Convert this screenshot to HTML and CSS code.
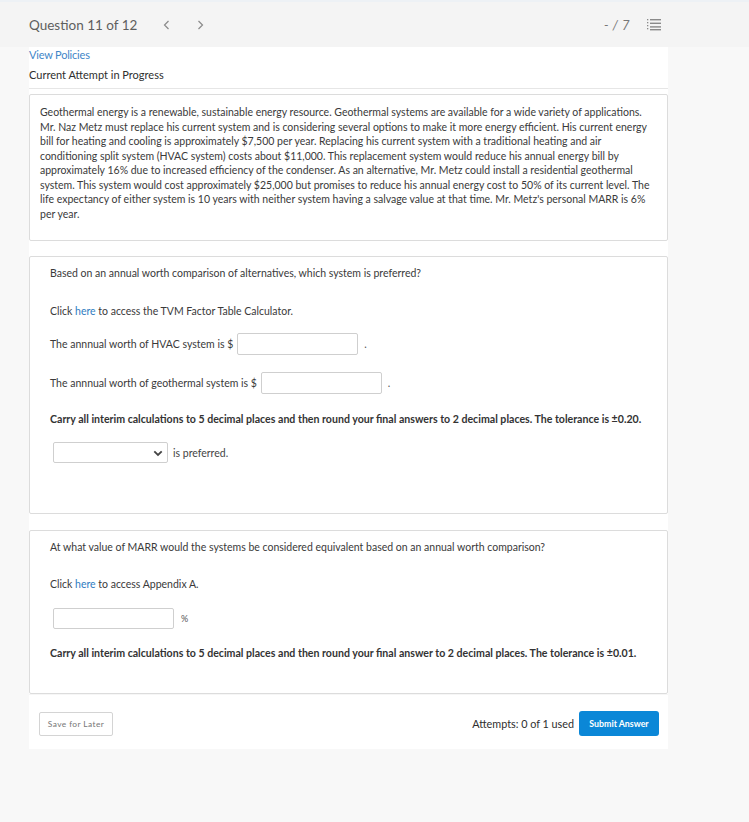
FILE: index.html
```html
<!DOCTYPE html>
<html lang="en">
<head>
<meta charset="utf-8">
<title>Question 11 of 12</title>
<link rel="stylesheet" href="styles.css">
</head>
<body>
<header class="topbar">
  <div class="topbar-inner">
    <div class="qnav">
      <span class="qtitle">Question 11 of 12</span>
      <span class="arrow prev"><svg width="7" height="10" viewBox="0 0 7 10"><path d="M5.5 1 L1.5 5 L5.5 9" fill="none" stroke="#8a8a8a" stroke-width="1.2"/></svg></span>
      <span class="arrow next"><svg width="7" height="10" viewBox="0 0 7 10"><path d="M1.5 1 L5.5 5 L1.5 9" fill="none" stroke="#8a8a8a" stroke-width="1.2"/></svg></span>
    </div>
    <div class="qscore">
      <span class="points">- / 7</span>
      <span class="listicon"><svg width="14" height="13" viewBox="0 0 14 13"><g fill="#8a8a8a"><rect x="0" y="1" width="1.3" height="1.3"/><rect x="0" y="4" width="1.3" height="1.3"/><rect x="0" y="7" width="1.3" height="1.3"/><rect x="0" y="10" width="1.3" height="1.3"/><rect x="3" y="1" width="11" height="1.4"/><rect x="3" y="4.6" width="11" height="1.4"/><rect x="3" y="8.2" width="11" height="1.4"/><rect x="3" y="11" width="11" height="1.4"/></g></svg></span>
    </div>
  </div>
</header>

<main class="column">
  <a class="view-link" href="#">View Policies</a>
  <div class="attempt-status">Current Attempt in Progress</div>

  <section class="box problem">
    <p>Geothermal energy is a renewable, sustainable energy resource. Geothermal systems are available for a wide variety of applications. Mr. Naz Metz must replace his current system and is considering several options to make it more energy efficient. His current energy bill for heating and cooling is approximately $7,500 per year. Replacing his current system with a traditional heating and air conditioning split system (HVAC system) costs about $11,000. This replacement system would reduce his annual energy bill by approximately 16% due to increased efficiency of the condenser. As an alternative, Mr. Metz could install a residential geothermal system. This system would cost approximately $25,000 but promises to reduce his annual energy cost to 50% of its current level. The life expectancy of either system is 10 years with neither system having a salvage value at that time. Mr. Metz's personal MARR is 6% per year.</p>
  </section>

  <section class="box part part-a">
    <p class="line q">Based on an annual worth comparison of alternatives, which system is preferred?</p>
    <p class="line click">Click <a href="#">here</a> to access the TVM Factor Table Calculator.</p>
    <div class="row row-hvac"><span>The annnual worth of HVAC system is $</span><input class="num num-hvac" type="text"><span class="dot">.</span></div>
    <div class="row row-geo"><span>The annnual worth of geothermal system is $</span><input class="num num-geo" type="text"><span class="dot">.</span></div>
    <p class="line carry">Carry all interim calculations to 5 decimal places and then round your final answers to 2 decimal places. The tolerance is ±0.20.</p>
    <div class="row row-select">
      <div class="select"><svg class="chev" width="10" height="7" viewBox="0 0 10 7"><path d="M1.3 1.3 L5 5 L8.7 1.3" fill="none" stroke="#444" stroke-width="1.8"/></svg></div>
      <span class="pref">is preferred.</span>
    </div>
  </section>

  <section class="box part part-b">
    <p class="line q">At what value of MARR would the systems be considered equivalent based on an annual worth comparison?</p>
    <p class="line click">Click <a href="#">here</a> to access Appendix A.</p>
    <div class="row row-pct"><input class="num num-pct" type="text"><span class="pct">%</span></div>
    <p class="line carry">Carry all interim calculations to 5 decimal places and then round your final answer to 2 decimal places. The tolerance is ±0.01.</p>
  </section>

  <footer class="actions">
    <button class="btn-save" type="button">Save for Later</button>
    <div class="submit-area">
      <span class="attempts">Attempts: 0 of 1 used</span>
      <button class="btn-submit" type="button">Submit Answer</button>
    </div>
  </footer>
</main>
</body>
</html>
```

FILE: styles.css
```css
* { box-sizing: border-box; }

html, body {
  margin: 0;
  padding: 0;
}

body {
  background: #f8f8f8;
  font-family: "Lato", "Liberation Sans", sans-serif;
  color: #333;
}

a { color: #2f7cc1; text-decoration: none; }

.topbar {
  height: 47px;
  background: #f4f4f4;
  border-top: 2px solid #edf1f5;
}

.topbar-inner {
  margin-left: 29px;
  width: 632px;
  height: 45px;
  display: flex;
  align-items: center;
  justify-content: space-between;
}

.qnav {
  display: flex;
  align-items: center;
}

.qtitle {
  font-size: 13.5px;
  color: #5e5e5e;
}

.arrow {
  display: flex;
  align-items: center;
}

.arrow.prev { margin-left: 26px; }
.arrow.next { margin-left: 27px; }

.qscore {
  display: flex;
  align-items: center;
}

.points {
  font-size: 13px;
  color: #777;
  font-style: italic;
  letter-spacing: 0.5px;
}

.listicon {
  display: flex;
  margin-left: 17px;
}

.column {
  margin-left: 29px;
  width: 639px;
  background: #fff;
}

.view-link {
  display: block;
  font-size: 11px;
  line-height: 16px;
  height: 16px;
  color: #3f86c8;
  letter-spacing: -0.2px;
}

.attempt-status {
  margin-top: 4px;
  font-size: 11px;
  line-height: 16px;
  color: #2e2e2e;
  padding-bottom: 5px;
  border-bottom: 1px solid #e6e6e6;
}

.box {
  border: 1px solid #dcdcdc;
  border-radius: 2px;
  background: #fff;
}

.problem {
  margin-top: 5px;
  padding: 10px 11px 19px 10px;
}

.problem p {
  margin: 0;
  font-size: 10.5px;
  line-height: 14.5px;
  color: #3a3a3a;
}

.part {
  padding-left: 20px;
  padding-right: 12px;
  padding-top: 9px;
}

.part-a {
  margin-top: 15px;
  padding-bottom: 50px;
}

.part-b {
  margin-top: 16px;
  padding-bottom: 33px;
}

.line {
  margin: 0;
  font-size: 10.5px;
  line-height: 14px;
  color: #3a3a3a;
}

.part .click { margin-top: 24px; }
.part-b .click { margin-top: 23px; }

.carry {
  font-weight: 700;
  color: #333;
  font-size: 10.6px;
}

.part-a .carry { margin-top: 18px; }
.part-b .carry { margin-top: 17px; }

.row {
  display: flex;
  align-items: center;
  font-size: 10.5px;
  color: #3a3a3a;
}

.row-hvac { margin-top: 15px; height: 22px; }
.row-geo { margin-top: 17px; height: 22px; }

.num {
  height: 22px;
  border: 1px solid #cfcfcf;
  border-radius: 2px;
  background: #fff;
  padding: 0 4px;
  font: inherit;
}

.num-hvac { width: 121px; margin-left: 4px; }
.num-geo { width: 121px; margin-left: 4px; }

.dot {
  margin-left: 6px;
  color: #555;
}

.row-select { margin-top: 16px; height: 21px; }

.select {
  position: relative;
  margin-left: 3px;
  width: 115px;
  height: 21px;
  border: 1px solid #cfcfcf;
  border-radius: 2px;
  background: #fff;
}

.chev {
  position: absolute;
  right: 4px;
  top: 7px;
}

.pref {
  margin-left: 5px;
  color: #444;
}

.row-pct { margin-top: 17px; height: 21px; }

.num-pct {
  width: 121px;
  height: 21px;
  margin-left: 3px;
}

.pct {
  margin-left: 7px;
  font-size: 9px;
  color: #555;
}

.actions {
  display: flex;
  justify-content: space-between;
  align-items: center;
  padding: 16px 9px 13px 10px;
  border-top: 1px solid #f6f6f6;
}

.btn-save {
  height: 24px;
  width: 74px;
  border: 1px solid #d4d4d4;
  border-radius: 2px;
  background: #fff;
  font-family: "Lato", "Liberation Sans", sans-serif;
  font-size: 8.4px;
  color: #777;
  letter-spacing: 0.4px;
  padding: 0;
}

.submit-area {
  display: flex;
  align-items: center;
}

.attempts {
  font-size: 10.8px;
  color: #2e2e2e;
}

.btn-submit {
  margin-left: 5px;
  height: 25px;
  width: 80px;
  border: none;
  border-radius: 3px;
  background: #0b87d7;
  color: #fff;
  font-family: "Lato", "Liberation Sans", sans-serif;
  font-weight: 700;
  font-size: 8.8px;
  padding: 0;
}
```
